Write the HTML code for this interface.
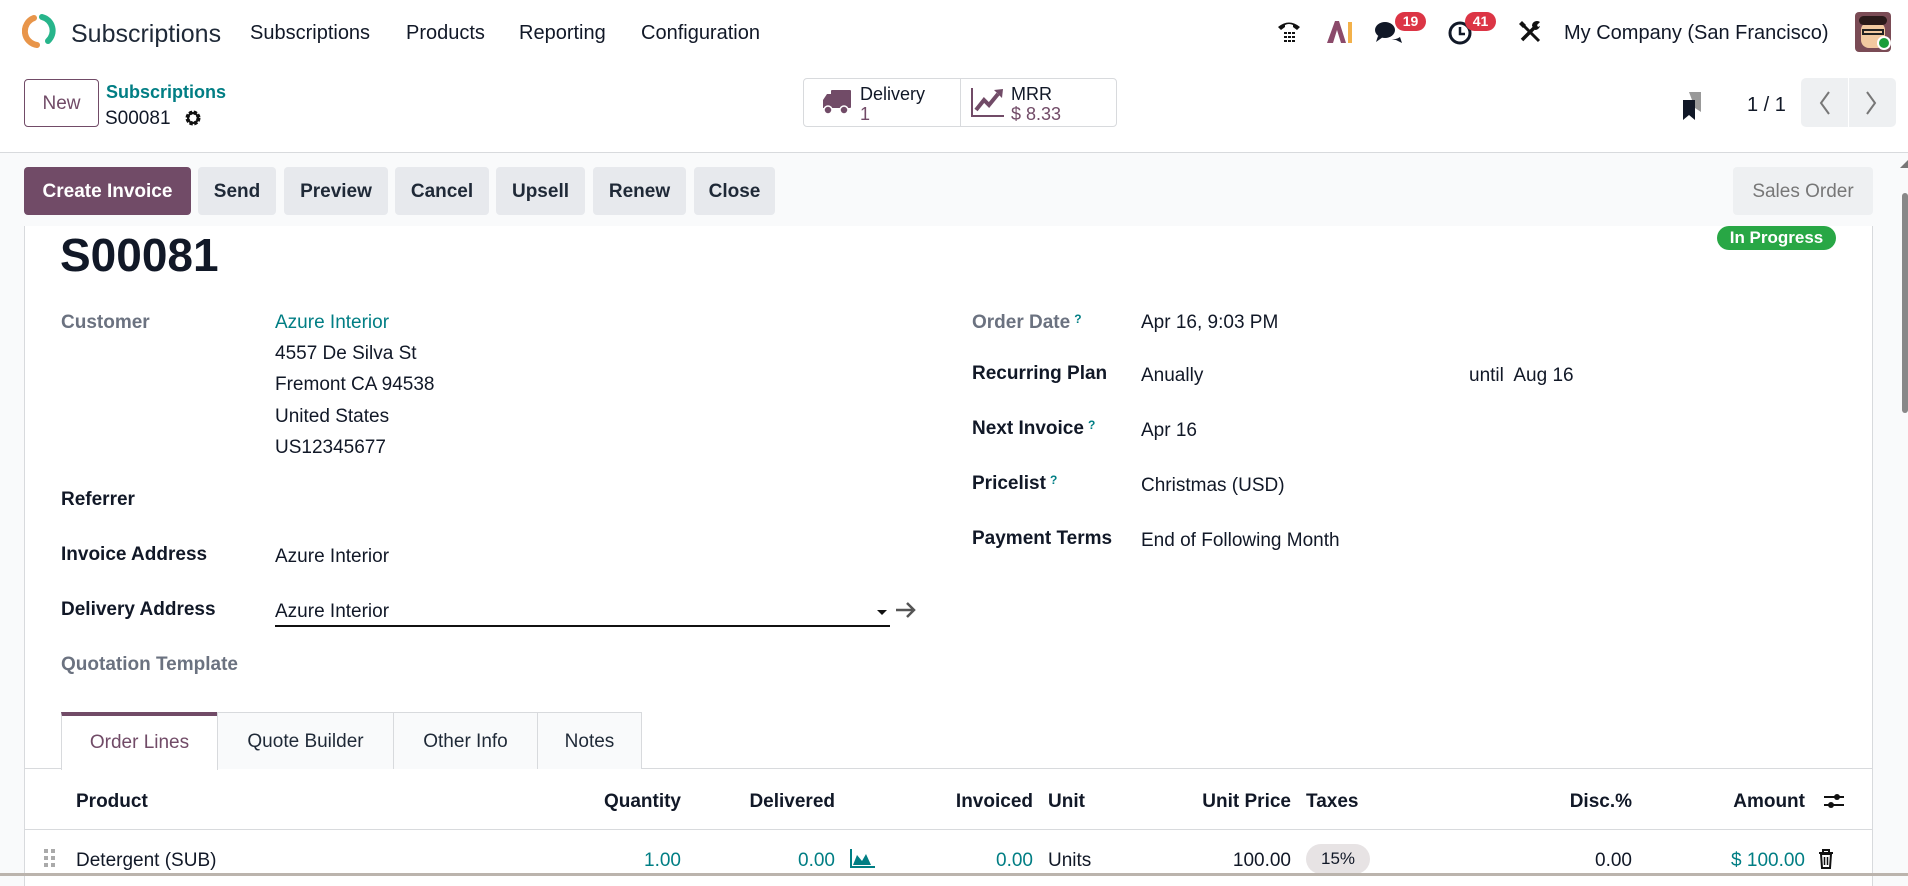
<!DOCTYPE html>
<html><head><meta charset="utf-8">
<style>
*{box-sizing:border-box;margin:0;padding:0}
body{width:1908px;height:876px;overflow:hidden;background:#f9fafb;font-family:"Liberation Sans",sans-serif;color:#111827;position:relative;font-size:19px}
.a{position:absolute;white-space:nowrap;line-height:24px}
.top{position:absolute;left:0;top:0;width:1908px;height:153px;background:#fff;border-bottom:1px solid #d8dadd}
.btn{position:absolute;top:167px;height:48px;background:#e7e9ed;border-radius:4px;font-weight:bold;font-size:19px;line-height:50px;text-align:center;color:#1f2937}
.sheet{position:absolute;left:24px;top:226px;width:1849px;height:660px;background:#fff;border-left:1px solid #d8dadd;border-right:1px solid #d8dadd}
.lbl{font-weight:bold;color:#111827}
.mut{color:#6b7280}
.teal{color:#017e84}
.r{text-align:right}
.q{font-size:12px;color:#017e84;vertical-align:top;position:relative;top:-4px;margin-left:4px;font-weight:bold}
.tab{position:absolute;top:712px;height:57px;border:1px solid #d8dadd;border-bottom:none;background:#f9fafb;font-size:19px;line-height:58px;text-align:center;color:#1f2937}
.f{position:absolute;left:0;top:2px;width:1908px;height:0}
</style></head><body>
<div class="top"></div>
<svg class="a" style="left:22px;top:13px" width="36" height="36" viewBox="0 0 36 36">
<path d="M12 5 A14 14 0 0 0 15 32" stroke="#e8954a" stroke-width="6" fill="none" stroke-linecap="round"/>
<path d="M20 4 A14 14 0 0 1 26 28" stroke="#27b58b" stroke-width="6" fill="none" stroke-linecap="round"/>
</svg>
<div class="a" style="left:71px;top:20px;font-size:25px;line-height:28px;color:#1f2937">Subscriptions</div>
<div class="a" style="left:250px;top:21px;font-size:20px">Subscriptions</div>
<div class="a" style="left:406px;top:21px;font-size:20px">Products</div>
<div class="a" style="left:519px;top:21px;font-size:20px">Reporting</div>
<div class="a" style="left:641px;top:21px;font-size:20px">Configuration</div>
<svg class="a" style="left:1276px;top:18px" width="26" height="26" viewBox="0 0 26 26"><path d="M2 9 Q13 0 24 9 L21 12 L17 9 L17 7 Q13 5 9 7 L9 9 L5 12Z" fill="#111"/><g fill="#111"><rect x="8" y="14" width="3" height="2"/><rect x="12" y="14" width="3" height="2"/><rect x="16" y="14" width="3" height="2"/><rect x="8" y="18" width="3" height="2"/><rect x="12" y="18" width="3" height="2"/><rect x="16" y="18" width="3" height="2"/><rect x="8" y="22" width="3" height="2"/><rect x="12" y="22" width="3" height="2"/><rect x="16" y="22" width="3" height="2"/></g></svg>
<svg class="a" style="left:1326px;top:20px" width="28" height="24" viewBox="0 0 28 24"><path d="M1 23 L9 1 L13 1 L20 23 L15 23 L11 10 L7 23Z" fill="#8b4a6a"/><rect x="22" y="2" width="4" height="21" fill="#f3b14a"/></svg>
<svg class="a" style="left:1374px;top:20px" width="30" height="26" viewBox="0 0 30 26"><ellipse cx="11" cy="10" rx="10" ry="8" fill="#111827"/><path d="M4 16 L2 22 L9 17Z" fill="#111827"/><path d="M16 19 Q22 20 26 17 L28 23 L22 20" fill="#111827"/></svg>
<div class="a" style="left:1395px;top:12px;width:31px;height:19px;border-radius:10px;background:#dc3545;color:#fff;font-size:14px;font-weight:bold;line-height:19px;text-align:center">19</div>
<svg class="a" style="left:1448px;top:20px" width="26" height="26" viewBox="0 0 26 26"><circle cx="12" cy="13" r="10" stroke="#111827" stroke-width="3" fill="none"/><path d="M12 7 V14 H17" stroke="#111827" stroke-width="2.5" fill="none"/></svg>
<div class="a" style="left:1465px;top:12px;width:31px;height:19px;border-radius:10px;background:#dc3545;color:#fff;font-size:14px;font-weight:bold;line-height:19px;text-align:center">41</div>
<svg class="a" style="left:1518px;top:20px" width="24" height="24" viewBox="0 0 24 24"><path d="M6 6 L21 21" stroke="#111" stroke-width="3"/><path d="M1 4 L4 1 L8 5 L5 8Z" fill="#111"/><path d="M16 8 L4 20" stroke="#111" stroke-width="3.5"/><path d="M14 6 A5 5 0 0 1 22 2 L19 5 L20 7 L22 6 A5 5 0 0 1 17 10Z" fill="#111"/></svg>
<div class="a" style="left:1564px;top:21px;font-size:20px">My Company (San Francisco)</div>
<div class="a" style="left:1855px;top:12px;width:36px;height:40px;border-radius:4px;background:#7a4b55;overflow:hidden"><div style="position:absolute;left:6px;top:10px;width:24px;height:26px;background:#f2c9a0;border-radius:8px"></div><div style="position:absolute;left:4px;top:4px;width:28px;height:9px;background:#2a1a1a;border-radius:6px"></div><div style="position:absolute;left:7px;top:17px;width:22px;height:6px;border:2px solid #222"></div></div>
<div class="a" style="left:1877px;top:36px;width:14px;height:14px;border-radius:50%;background:#1a9e3a;border:2px solid #fff"></div>
<div class="a" style="left:24px;top:79px;width:75px;height:48px;border:1px solid #714b67;border-radius:4px;color:#714b67;font-size:19px;line-height:48px;text-align:center">New</div>
<div class="a" style="left:106px;top:80px;font-size:18px;font-weight:bold;color:#017e84">Subscriptions</div>
<div class="a" style="left:105px;top:107px;font-size:19px">S00081</div>
<svg class="a" style="left:184px;top:109px" width="18" height="18" viewBox="0 0 18 18"><circle cx="9" cy="9" r="5.5" stroke="#111" stroke-width="4" stroke-dasharray="3 1.4" fill="none"/><circle cx="9" cy="9" r="5" stroke="#111" stroke-width="2" fill="none"/></svg>
<div class="a" style="left:803px;top:78px;width:314px;height:49px;border:1px solid #d8dadd;border-radius:4px"></div>
<div class="a" style="left:960px;top:79px;width:1px;height:47px;background:#d8dadd"></div>
<svg class="a" style="left:822px;top:88px" width="30" height="28" viewBox="0 0 30 28"><rect x="9" y="2" width="20" height="18" rx="1" fill="#714b67"/><path d="M1 12 L5 6 L10 6 L10 20 L1 20Z" fill="#714b67"/><circle cx="6" cy="22" r="4" fill="#714b67" stroke="#fff" stroke-width="1.5"/><circle cx="22" cy="22" r="4" fill="#714b67" stroke="#fff" stroke-width="1.5"/></svg>
<div class="a" style="left:860px;top:84px;font-size:18px;line-height:20px">Delivery</div>
<div class="a" style="left:860px;top:104px;font-size:18px;line-height:20px;color:#714b67">1</div>
<svg class="a" style="left:970px;top:86px" width="36" height="32" viewBox="0 0 36 32"><path d="M2 2 V30 H34" stroke="#714b67" stroke-width="2" fill="none"/><path d="M6 24 L14 14 L19 19 L28 8" stroke="#714b67" stroke-width="4" fill="none"/><path d="M24 4 L33 3 L32 12Z" fill="#714b67"/></svg>
<div class="a" style="left:1011px;top:84px;font-size:18px;line-height:20px">MRR</div>
<div class="a" style="left:1011px;top:104px;font-size:18px;line-height:20px;color:#714b67">$ 8.33</div>
<svg class="a" style="left:1682px;top:92px" width="22" height="28" viewBox="0 0 22 28"><path d="M7 0 H19 V20 L13 16 Z" fill="#999"/><path d="M1 8 H13 V28 L7 23 L1 28Z" fill="#111827"/></svg>
<div class="a" style="left:1747px;top:93px;font-size:20px">1 / 1</div>
<div class="a" style="left:1801px;top:78px;width:95px;height:49px;background:#eef0f2;border-radius:5px"></div>
<div class="a" style="left:1848px;top:78px;width:1px;height:49px;background:#fff"></div>
<svg class="a" style="left:1815px;top:90px" width="70" height="26" viewBox="0 0 70 26"><path d="M14 2 L6 13 L14 24" stroke="#777" stroke-width="2" fill="none"/><path d="M52 2 L60 13 L52 24" stroke="#777" stroke-width="2" fill="none"/></svg>
<div class="btn" style="left:24px;width:167px;background:#714b67;color:#fff">Create Invoice</div>
<div class="btn" style="left:198px;width:78px">Send</div>
<div class="btn" style="left:284px;width:104px">Preview</div>
<div class="btn" style="left:395px;width:94px">Cancel</div>
<div class="btn" style="left:496px;width:89px">Upsell</div>
<div class="btn" style="left:593px;width:93px">Renew</div>
<div class="btn" style="left:694px;width:81px">Close</div>
<div class="btn" style="left:1733px;width:140px;background:#eef0f2;color:#777;font-weight:normal">Sales Order</div>
<div class="a" style="left:1902px;top:193px;width:6px;height:220px;background:#888;border-radius:3px"></div>
<svg class="a" style="left:1900px;top:160px" width="8" height="8"><path d="M0 8 L8 0 V8Z" fill="#777"/></svg>
<div class="sheet"></div>
<div class="a" style="left:1717px;top:226px;width:119px;height:24px;background:#28a745;border-radius:12px;color:#fff;font-weight:bold;font-size:17px;text-align:center">In Progress</div>
<div class="a" style="left:60px;top:227px;font-size:46px;line-height:56px;font-weight:bold">S00081</div>
<div class="f">
<div class="a lbl" style="left:61px;top:309px;color:#6b7280">Customer</div>
<div class="a teal" style="left:275px;top:309px">Azure Interior</div>
<div class="a" style="left:275px;top:340px">4557 De Silva St</div>
<div class="a" style="left:275px;top:371px">Fremont CA 94538</div>
<div class="a" style="left:275px;top:403px">United States</div>
<div class="a" style="left:275px;top:434px">US12345677</div>
<div class="a lbl" style="left:61px;top:486px">Referrer</div>
<div class="a lbl" style="left:61px;top:541px">Invoice Address</div>
<div class="a" style="left:275px;top:543px">Azure Interior</div>
<div class="a lbl" style="left:61px;top:596px">Delivery Address</div>
<div class="a" style="left:275px;top:598px">Azure Interior</div>
<div class="a lbl" style="left:61px;top:651px;color:#6b7280">Quotation Template</div>
<div class="a lbl" style="left:972px;top:309px;color:#6b7280">Order Date<span class="q">?</span></div>
<div class="a" style="left:1141px;top:309px">Apr 16, 9:03 PM</div>
<div class="a lbl" style="left:972px;top:360px">Recurring Plan</div>
<div class="a" style="left:1141px;top:362px">Anually</div>
<div class="a" style="left:1469px;top:362px">until&nbsp; Aug 16</div>
<div class="a lbl" style="left:972px;top:415px">Next Invoice<span class="q">?</span></div>
<div class="a" style="left:1141px;top:417px">Apr 16</div>
<div class="a lbl" style="left:972px;top:470px">Pricelist<span class="q">?</span></div>
<div class="a" style="left:1141px;top:472px">Christmas (USD)</div>
<div class="a lbl" style="left:972px;top:525px">Payment Terms</div>
<div class="a" style="left:1141px;top:527px">End of Following Month</div>
<div class="a lbl" style="left:76px;top:788px">Product</div>
<div class="a lbl r" style="left:481px;width:200px;top:788px">Quantity</div>
<div class="a lbl r" style="left:635px;width:200px;top:788px">Delivered</div>
<div class="a lbl r" style="left:833px;width:200px;top:788px">Invoiced</div>
<div class="a lbl" style="left:1048px;top:788px">Unit</div>
<div class="a lbl r" style="left:1091px;width:200px;top:788px">Unit Price</div>
<div class="a lbl" style="left:1306px;top:788px">Taxes</div>
<div class="a lbl r" style="left:1432px;width:200px;top:788px">Disc.%</div>
<div class="a lbl r" style="left:1605px;width:200px;top:788px">Amount</div>
<div class="a" style="left:76px;top:847px">Detergent (SUB)</div>
<div class="a teal r" style="left:481px;width:200px;top:847px">1.00</div>
<div class="a teal r" style="left:635px;width:200px;top:847px">0.00</div>
<div class="a teal r" style="left:833px;width:200px;top:847px">0.00</div>
<div class="a" style="left:1048px;top:847px">Units</div>
<div class="a r" style="left:1091px;width:200px;top:847px">100.00</div>
<div class="a r" style="left:1432px;width:200px;top:847px">0.00</div>
<div class="a teal r" style="left:1605px;width:200px;top:847px">$ 100.00</div>
</div>
<div class="a" style="left:275px;top:625px;width:615px;height:2px;background:#111"></div>
<svg class="a" style="left:876px;top:600px" width="42" height="20" viewBox="0 0 42 20"><path d="M1 10 H11 L6 15Z" fill="#111"/><path d="M20 10 H38 M31 3 L38 10 L31 17" stroke="#555" stroke-width="2.5" fill="none"/></svg>
<div class="a" style="left:25px;top:768px;width:1847px;height:1px;background:#d8dadd"></div>
<div class="tab" style="left:61px;width:157px;background:#fff;height:58px;border-top:4px solid #714b67;color:#714b67;line-height:54px">Order Lines</div>
<div class="tab" style="left:217px;width:177px">Quote Builder</div>
<div class="tab" style="left:393px;width:145px">Other Info</div>
<div class="tab" style="left:537px;width:105px">Notes</div>
<div class="a" style="left:25px;top:829px;width:1847px;height:1px;background:#d8dadd"></div>
<svg class="a" style="left:1823px;top:790px" width="22" height="22" viewBox="0 0 22 22"><path d="M1 7 H21 M1 15 H21" stroke="#111" stroke-width="2"/><circle cx="14" cy="7" r="3" fill="#111"/><circle cx="8" cy="15" r="3" fill="#111"/></svg>
<svg class="a" style="left:44px;top:849px" width="12" height="20"><g fill="#aaa"><rect x="0" y="0" width="4" height="4"/><rect x="7" y="0" width="4" height="4"/><rect x="0" y="7" width="4" height="4"/><rect x="7" y="7" width="4" height="4"/><rect x="0" y="14" width="4" height="4"/><rect x="7" y="14" width="4" height="4"/></g></svg>
<svg class="a" style="left:849px;top:849px" width="26" height="20" viewBox="0 0 26 20"><path d="M2 0 V18 H26" stroke="#017e84" stroke-width="2" fill="none"/><path d="M4 16 L8 6 L13 12 L17 5 L22 16Z" fill="#017e84"/></svg>
<div class="a" style="left:1306px;top:844px;width:64px;height:30px;border-radius:15px;background:#e7e3e4;font-size:17px;line-height:30px;text-align:center">15%</div>
<svg class="a" style="left:1818px;top:849px" width="16" height="20" viewBox="0 0 16 20"><path d="M1 4 H15 M5 4 V1 H11 V4" stroke="#111" stroke-width="2" fill="none"/><path d="M3 5 H13 L12 19 H4Z" stroke="#111" stroke-width="2" fill="none"/><path d="M6.5 8 V16 M9.5 8 V16" stroke="#111" stroke-width="1.5"/></svg>
<div class="a" style="left:0;top:873px;width:1908px;height:3px;background:#bbb4ad"></div>
</body></html>
